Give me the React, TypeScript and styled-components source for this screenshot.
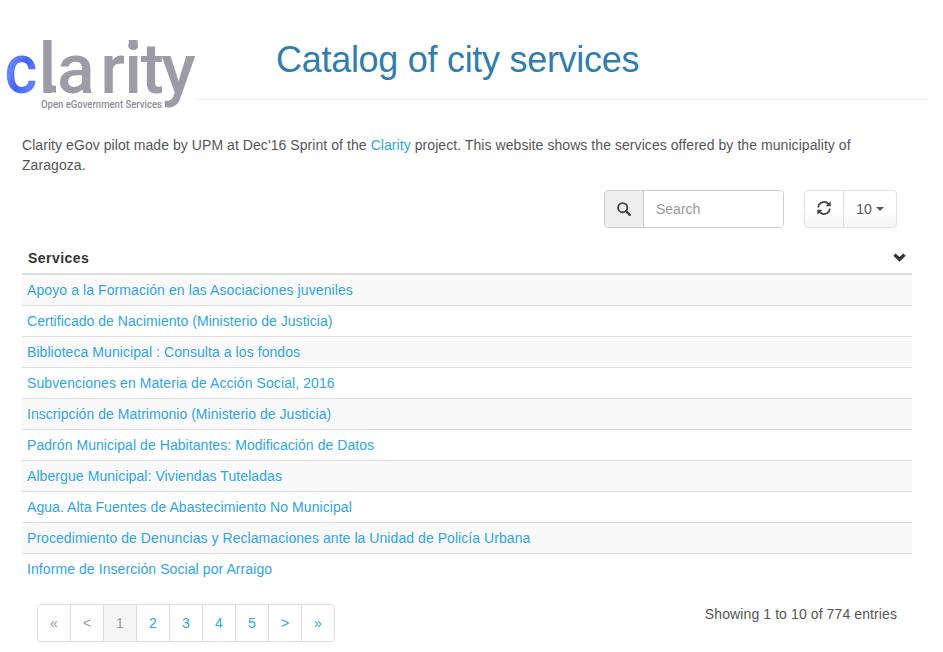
import React from 'react';
import styled, { createGlobalStyle } from 'styled-components';

const GlobalStyle = createGlobalStyle`
  * { box-sizing: border-box; }
  body {
    margin: 0;
    background: #fff;
    color: #555;
    font: 14px/20px "Liberation Sans", Arial, sans-serif;
  }
  button, input { font: inherit; }
`;

const Page = styled.div`
  height: 652px;
  overflow: hidden;
`;

const Header = styled.header`
  display: flex;
  height: 115px;
`;

const LogoLink = styled.a`
  flex: none;
  width: 196px;
  height: 115px;
`;

const TitleBar = styled.div`
  width: 732px;
  height: 100px;
  padding: 40px 0 0 80px;
  border-bottom: 1px solid #eee;
`;

const Title = styled.h1`
  margin: 0;
  font-size: 36px;
  font-weight: 400;
  line-height: 40px;
  letter-spacing: -0.29px;
  color: #317eac;
  white-space: nowrap;
`;

const Main = styled.main`
  width: 890px;
  margin: 20px 0 0 22px;
`;

const Intro = styled.p`
  margin: 0 0 15px;
  padding-right: 15px;
  letter-spacing: 0.065px;
`;

const Link = styled.a`
  color: #2fa4e7;
  text-decoration: none;
`;

const Toolbar = styled.div`
  display: flex;
  justify-content: flex-end;
  gap: 20px;
  height: 38px;
  padding-right: 15px;
`;

const SearchGroup = styled.div`
  display: flex;
  width: 180px;
  border: 1px solid #ccc;
  border-radius: 4px;
  overflow: hidden;
`;

const Addon = styled.span`
  display: flex;
  align-items: center;
  justify-content: center;
  width: 39px;
  background: #eee;
  border-right: 1px solid #ccc;
`;

const SearchInput = styled.input`
  flex: 1;
  min-width: 0;
  padding: 0 12px;
  border: 0;
  outline: 0;
  background: #fff;
  color: #555;
  &::placeholder { color: #999; opacity: 1; }
`;

const ButtonGroup = styled.div`
  display: flex;
  width: 93px;
  border: 1px solid #e2e2e2;
  border-radius: 4px;
  overflow: hidden;
  background: linear-gradient(#fff 0%, #fff 55%, #f5f5f5 100%);
`;

const ToolButton = styled.button<{ $width: number }>`
  display: flex;
  align-items: center;
  justify-content: center;
  gap: 4px;
  width: ${(p) => p.$width}px;
  padding: 0;
  border: 0;
  background: transparent;
  color: #555;
  & + & { border-left: 1px solid #e2e2e2; }
  & > svg { margin-bottom: 2px; }
`;

const Caret = styled.span`
  border: 4px solid transparent;
  border-top-color: #555;
  border-bottom: 0;
`;

const TableHead = styled.div`
  display: flex;
  align-items: center;
  justify-content: space-between;
  height: 47px;
  padding: 15px 6px 0;
  border-bottom: 2px solid #ddd;
  color: #333;
  font-weight: 700;
  letter-spacing: 0.45px;
  & > svg { margin-bottom: 2px; }
`;

const Row = styled.div<{ $tracking: number }>`
  height: 31px;
  padding: 5px;
  border-bottom: 1px solid #ddd;
  letter-spacing: ${(p) => p.$tracking}px;
  white-space: nowrap;
  &:nth-child(odd) { background: #f9f9f9; }
  &:last-child { border-bottom-color: transparent; }
`;

const Footer = styled.footer`
  display: flex;
  align-items: flex-start;
  justify-content: space-between;
  padding: 19px 15px 0;
`;

const Pagination = styled.nav`
  display: flex;
  height: 38px;
  border: 1px solid #ddd;
  border-radius: 4px;
  overflow: hidden;
`;

const PageItem = styled.a<{ $state?: 'active' | 'disabled' }>`
  display: flex;
  align-items: center;
  justify-content: center;
  width: 33px;
  color: ${(p) => (p.$state ? '#999' : '#2fa4e7')};
  background: ${(p) => (p.$state === 'active' ? '#f5f5f5' : '#fff')};
  &:not(:first-child) { border-left: 1px solid #ddd; }
  &:first-child { width: 32px; }
`;

const Summary = styled.span`
  letter-spacing: 0.1px;
`;

const Logo = () => (
  <svg width="196" height="115" viewBox="0 0 196 115" fontFamily="Roboto, sans-serif">
    <defs>
      <linearGradient id="cBlue" x1="0" y1="0" x2="1" y2="1">
        <stop offset="0" stopColor="#4b6ff8" />
        <stop offset="0.35" stopColor="#6583fb" />
        <stop offset="0.55" stopColor="#4361f2" />
        <stop offset="0.75" stopColor="#6180fb" />
        <stop offset="1" stopColor="#4562f4" />
      </linearGradient>
    </defs>
    <g fontSize="70" fontWeight="500">
      <text transform="translate(4.6 92.5) scale(0.9 1)" fill="url(#cBlue)">c</text>
      <text x="38.6 57 100.3 124.3 140.5 161.3" y="92.5" fill="#9d9ba6">larity</text>
    </g>
    <g fill="#9d9ba6">
      <path d="M51 80V82.5Q51 85.7 54 85.7H56V92.5H50Z" />
      <rect x="128.7" y="40" width="8.8" height="8.2" />
    </g>
    <text x="41" y="108" fontSize="10" fontWeight="500" fill="#8e8c96" textLength="121" lengthAdjust="spacingAndGlyphs">
      Open eGovernment Services
    </text>
  </svg>
);

const SearchIcon = () => (
  <svg width="14" height="14" viewBox="0 0 14 14" fill="none" stroke="#444">
    <circle cx="5.7" cy="5.7" r="4.6" strokeWidth="1.9" />
    <path d="M9.1 9.1 12.8 12.8" strokeWidth="2.4" strokeLinecap="round" />
  </svg>
);

const RefreshIcon = () => (
  <svg width="14" height="14" viewBox="0 0 14 14" fill="none" stroke="#444" strokeWidth="1.7">
    <path d="M1.3 6.6A5.7 5.7 0 0 1 11.4 3.1M12.7 7.4A5.7 5.7 0 0 1 2.6 10.9" />
    <path d="M13.7.3V5.3H8.7ZM.3 13.7V8.7H5.3Z" fill="#444" stroke="none" />
  </svg>
);

const ChevronIcon = () => (
  <svg width="13" height="9" viewBox="0 0 13 9">
    <path d="M.3 2.7 2.6.4 6.5 4.1 10.4.4 12.7 2.7 6.5 8.7Z" fill="#333" />
  </svg>
);

const services: { name: string; tracking: number }[] = [
  { name: 'Apoyo a la Formación en las Asociaciones juveniles', tracking: 0.09 },
  { name: 'Certificado de Nacimiento (Ministerio de Justicia)', tracking: 0.04 },
  { name: 'Biblioteca Municipal : Consulta a los fondos', tracking: 0.07 },
  { name: 'Subvenciones en Materia de Acción Social, 2016', tracking: 0.09 },
  { name: 'Inscripción de Matrimonio (Ministerio de Justicia)', tracking: 0.03 },
  { name: 'Padrón Municipal de Habitantes: Modificación de Datos', tracking: 0.06 },
  { name: 'Albergue Municipal: Viviendas Tuteladas', tracking: 0.08 },
  { name: 'Agua. Alta Fuentes de Abastecimiento No Municipal', tracking: 0.07 },
  { name: 'Procedimiento de Denuncias y Reclamaciones ante la Unidad de Policía Urbana', tracking: 0.06 },
  { name: 'Informe de Inserción Social por Arraigo', tracking: 0.08 },
];

const pages: { label: string; state?: 'active' | 'disabled' }[] = [
  { label: '«', state: 'disabled' },
  { label: '<', state: 'disabled' },
  { label: '1', state: 'active' },
  { label: '2' },
  { label: '3' },
  { label: '4' },
  { label: '5' },
  { label: '>' },
  { label: '»' },
];

export default function App() {
  return (
    <Page>
      <GlobalStyle />
      <Header>
        <LogoLink aria-label="Clarity"><Logo /></LogoLink>
        <TitleBar><Title>Catalog of city services</Title></TitleBar>
      </Header>
      <Main>
        <Intro>
          Clarity eGov pilot made by UPM at Dec'16 Sprint of the <Link>Clarity</Link> project. This
          website shows the services offered by the municipality of Zaragoza.
        </Intro>
        <Toolbar>
          <SearchGroup>
            <Addon><SearchIcon /></Addon>
            <SearchInput placeholder="Search" />
          </SearchGroup>
          <ButtonGroup>
            <ToolButton $width={38} aria-label="Refresh"><RefreshIcon /></ToolButton>
            <ToolButton $width={53}>10<Caret /></ToolButton>
          </ButtonGroup>
        </Toolbar>
        <TableHead><span>Services</span><ChevronIcon /></TableHead>
        <div>
          {services.map((s) => (
            <Row key={s.name} $tracking={s.tracking}><Link>{s.name}</Link></Row>
          ))}
        </div>
        <Footer>
          <Pagination>
            {pages.map((p) => <PageItem key={p.label} $state={p.state}>{p.label}</PageItem>)}
          </Pagination>
          <Summary>Showing 1 to 10 of 774 entries</Summary>
        </Footer>
      </Main>
    </Page>
  );
}
